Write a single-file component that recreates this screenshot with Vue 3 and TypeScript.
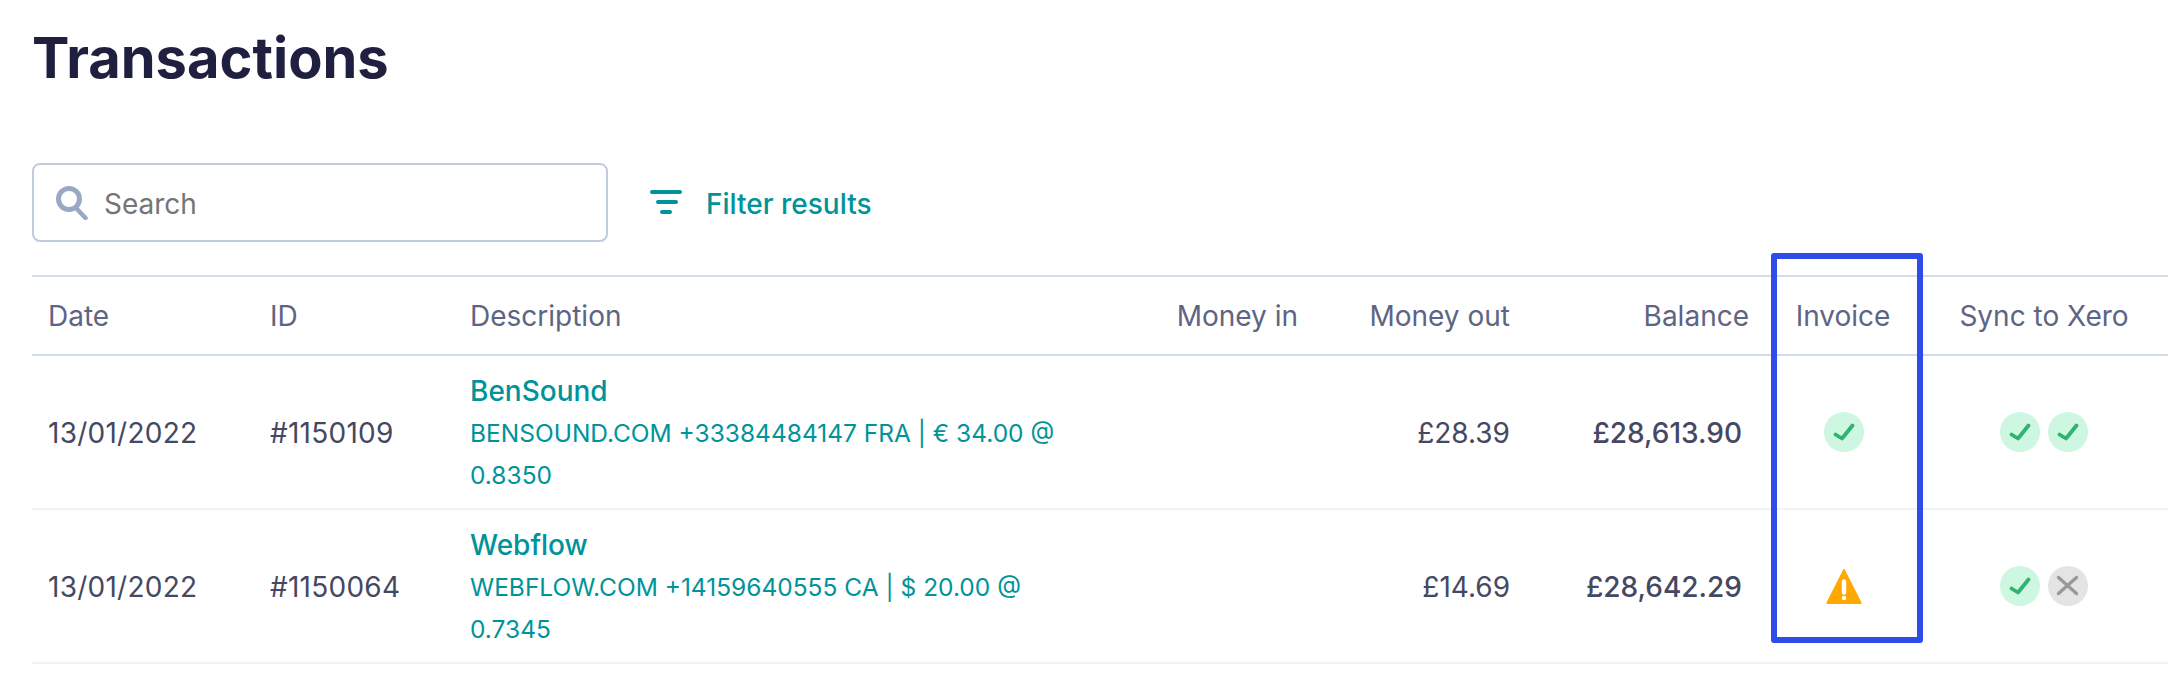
<script setup lang="ts">
interface Row {
  date: string
  id: string
  name: string
  detail: string
  moneyOut: string
  balance: string
  invoice: 'ok' | 'warn'
  sync: Array<'ok' | 'no'>
}

const rows: Row[] = [
  {
    date: '13/01/2022',
    id: '#1150109',
    name: 'BenSound',
    detail: 'BENSOUND.COM +33384484147 FRA | € 34.00 @ 0.8350',
    moneyOut: '£28.39',
    balance: '£28,613.90',
    invoice: 'ok',
    sync: ['ok', 'ok'],
  },
  {
    date: '13/01/2022',
    id: '#1150064',
    name: 'Webflow',
    detail: 'WEBFLOW.COM +14159640555 CA | $ 20.00 @ 0.7345',
    moneyOut: '£14.69',
    balance: '£28,642.29',
    invoice: 'warn',
    sync: ['ok', 'no'],
  },
]
</script>

<template>
  <main class="page">
    <h1 class="title">Transactions</h1>

    <div class="toolbar">
      <label class="search">
        <svg class="search-icon" width="32" height="34" viewBox="0 0 32 34" fill="none">
          <circle cx="13" cy="13" r="10.5" stroke="#9aa8c5" stroke-width="5" />
          <path d="M21 23l8.5 9" stroke="#9aa8c5" stroke-width="4.5" stroke-linecap="round" />
        </svg>
        <input class="search-input" type="text" placeholder="Search" />
      </label>
      <button class="filter" type="button">
        <svg width="32" height="26" viewBox="0 0 32 26" fill="none">
          <path
            d="M2 2h28M8 12h18M12 22h8"
            stroke="#00939a"
            stroke-width="4"
            stroke-linecap="round"
          />
        </svg>
        <span class="filter-label">Filter results</span>
      </button>
    </div>

    <div class="table-wrap">
      <table class="table">
        <colgroup>
          <col class="c-date" />
          <col class="c-id" />
          <col class="c-desc" />
          <col class="c-in" />
          <col class="c-out" />
          <col class="c-bal" />
          <col class="c-inv" />
          <col class="c-sync" />
        </colgroup>
        <thead>
          <tr>
            <th class="first">Date</th>
            <th>ID</th>
            <th>Description</th>
            <th class="right">Money in</th>
            <th class="right">Money out</th>
            <th class="right">Balance</th>
            <th class="center invoice-head">Invoice</th>
            <th class="center sync-head">Sync to Xero</th>
          </tr>
        </thead>
        <tbody>
          <tr v-for="row in rows" :key="row.id">
            <td class="first mono">{{ row.date }}</td>
            <td class="mono">{{ row.id }}</td>
            <td>
              <div class="desc">
                <div class="name">{{ row.name }}</div>
                <div class="detail">{{ row.detail }}</div>
              </div>
            </td>
            <td class="right"></td>
            <td class="right">{{ row.moneyOut }}</td>
            <td class="right balance">{{ row.balance }}</td>
            <td class="center">
              <div class="icons">
                <svg v-if="row.invoice === 'ok'" width="40" height="40" viewBox="0 0 40 40">
                  <circle cx="20" cy="20" r="20" fill="#cef7e2" />
                  <path
                    d="M11.5 22.5l6.5 4 10.5-13"
                    fill="none"
                    stroke="#2fb371"
                    stroke-width="3.8"
                    stroke-linecap="round"
                    stroke-linejoin="round"
                  />
                </svg>
                <svg v-else width="36" height="36" viewBox="0 0 36 36">
                  <path
                    d="M18 1L35 34.5a1 1 0 0 1-1 1.5H2a1 1 0 0 1-1-1.5Z"
                    fill="#ffa900"
                    stroke="#ffa900"
                    stroke-width="1"
                    stroke-linejoin="round"
                  />
                  <path d="M18 13.5v11" stroke="#fff" stroke-width="4.4" stroke-linecap="round" />
                  <circle cx="18" cy="30" r="2.2" fill="#fff" />
                </svg>
              </div>
            </td>
            <td class="center">
              <div class="icons sync">
                <template v-for="(state, i) in row.sync" :key="i">
                  <svg v-if="state === 'ok'" width="40" height="40" viewBox="0 0 40 40">
                    <circle cx="20" cy="20" r="20" fill="#cef7e2" />
                    <path
                      d="M11.5 22.5l6.5 4 10.5-13"
                      fill="none"
                      stroke="#2fb371"
                      stroke-width="3.8"
                      stroke-linecap="round"
                      stroke-linejoin="round"
                    />
                  </svg>
                  <svg v-else width="40" height="40" viewBox="0 0 40 40">
                    <circle cx="20" cy="20" r="20" fill="#e4e4e4" />
                    <path
                      d="M10.5 11.5l18 16M28.5 11.5l-18 16"
                      fill="none"
                      stroke="#999"
                      stroke-width="3.4"
                      stroke-linecap="round"
                    />
                  </svg>
                </template>
              </div>
            </td>
          </tr>
        </tbody>
      </table>
      <div class="highlight"></div>
    </div>
  </main>
</template>

<style scoped>
.page {
  box-sizing: border-box;
  width: 2178px;
  height: 684px;
  padding: 0 10px 0 32px;
  background: #fff;
  font-family: Inter, "Liberation Sans", sans-serif;
  font-size: 28px;
  color: #454862;
  overflow: hidden;
}

.title {
  margin: 0;
  padding-top: 24px;
  height: 163px;
  box-sizing: border-box;
  font-size: 56px;
  line-height: 68px;
  font-weight: 700;
  color: #1f1f3f;
}

.toolbar {
  display: flex;
  align-items: center;
  gap: 42px;
}

.search {
  box-sizing: border-box;
  width: 576px;
  height: 79px;
  display: flex;
  align-items: center;
  gap: 16px;
  padding-left: 22px;
  border: 2px solid #c0cbe0;
  border-radius: 8px;
}

.search-input {
  flex: 1;
  min-width: 0;
  border: 0;
  padding: 2px 0 0;
  outline: 0;
  background: none;
  font: inherit;
  color: inherit;
}

.search-input::placeholder {
  color: #757575;
  opacity: 1;
}

.filter {
  display: flex;
  align-items: center;
  gap: 24px;
  border: 0;
  padding: 0;
  background: none;
  font: inherit;
  font-weight: 500;
  color: #00939a;
}

.filter-label {
  padding-top: 2px;
}

.table-wrap {
  position: relative;
  margin-top: 33px;
}

.table {
  width: 2136px;
  table-layout: fixed;
  border-collapse: separate;
  border-spacing: 0;
}

.c-date { width: 223px; }
.c-id { width: 200px; }
.c-desc { width: 640px; }
.c-in { width: 218px; }
.c-out { width: 212px; }
.c-bal { width: 239px; }
.c-inv { width: 160px; }
.c-sync { width: 244px; }

th {
  box-sizing: border-box;
  height: 81px;
  padding: 0 15px;
  border-top: 2px solid #d3dcea;
  border-bottom: 2px solid #d3dcea;
  text-align: left;
  font-weight: 400;
  color: #5e6483;
  white-space: nowrap;
}

td {
  box-sizing: border-box;
  height: 154px;
  padding: 2px 15px 0;
  border-bottom: 2px solid #eff3f8;
  vertical-align: middle;
}

th.first,
td.first {
  padding-left: 16px;
}

td.mono {
  letter-spacing: 0.25px;
}

th.right,
td.right {
  text-align: right;
}

th.center,
td.center {
  text-align: center;
}

td.center {
  padding-top: 0;
}

th.invoice-head {
  padding: 0 16px 0 14px;
}

th.sync-head {
  padding: 0 19px 0 15px;
}

td.balance {
  padding-right: 22px;
  font-weight: 500;
}

.desc {
  width: 610px;
  color: #00939a;
}

.name {
  font-weight: 500;
  line-height: 42px;
}

.detail {
  font-size: 24.5px;
  line-height: 42px;
}

.icons {
  display: flex;
  justify-content: center;
  align-items: center;
}

.sync {
  gap: 8px;
  margin-left: -4px;
}

.highlight {
  position: absolute;
  left: 1739px;
  top: -22px;
  width: 152px;
  height: 390px;
  box-sizing: border-box;
  border: 6px solid #2f4be8;
  border-radius: 3px;
  pointer-events: none;
}
</style>

<style>
body {
  background: #fff;
}
</style>
